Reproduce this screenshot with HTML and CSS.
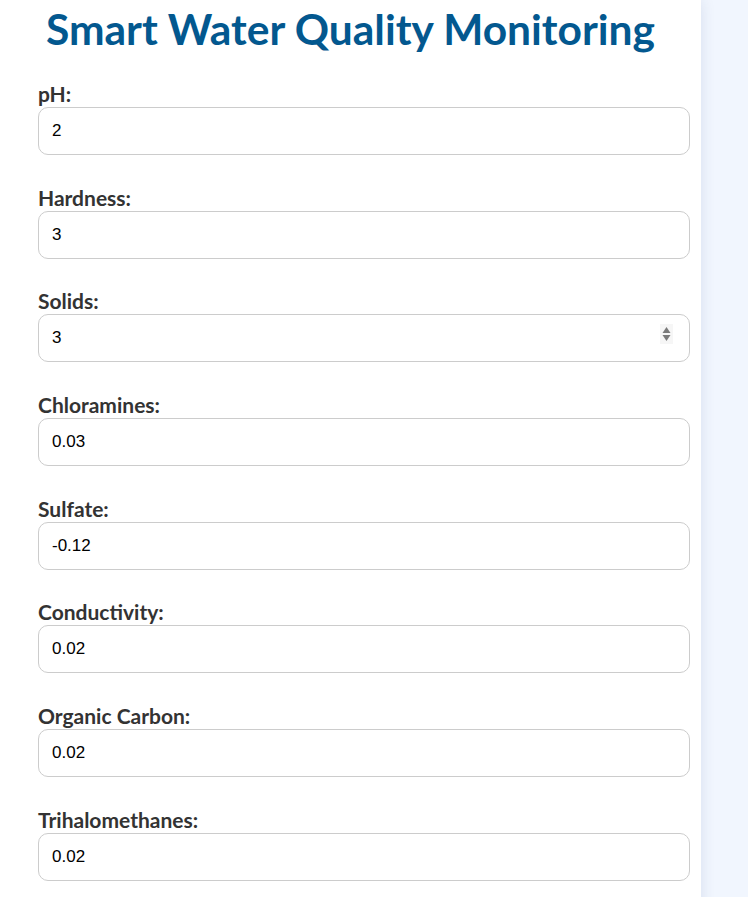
FILE: index.html
```html
<!DOCTYPE html>
<html>
<head>
<meta charset="utf-8">
<link rel="stylesheet" href="styles.css">
</head>
<body>
<div class="card">
  <h1 class="title">Smart Water Quality Monitoring</h1>
  <form class="form">
    <div class="group">
      <label class="label">pH:</label>
      <input class="field" type="text" value="2">
    </div>
    <div class="group">
      <label class="label">Hardness:</label>
      <input class="field" type="text" value="3">
    </div>
    <div class="group">
      <label class="label">Solids:</label>
      <div class="field-wrap">
        <input class="field" type="text" value="3">
        <span class="spinner">
          <svg width="11" height="18" viewBox="0 0 11 18"><path d="M5.5 2 L9.5 8 L1.5 8 Z" fill="#7a7a7a"/><path d="M1.5 10 L9.5 10 L5.5 16 Z" fill="#7a7a7a"/></svg>
        </span>
      </div>
    </div>
    <div class="group">
      <label class="label">Chloramines:</label>
      <input class="field" type="text" value="0.03">
    </div>
    <div class="group">
      <label class="label">Sulfate:</label>
      <input class="field" type="text" value="-0.12">
    </div>
    <div class="group">
      <label class="label">Conductivity:</label>
      <input class="field" type="text" value="0.02">
    </div>
    <div class="group">
      <label class="label">Organic Carbon:</label>
      <input class="field" type="text" value="0.02">
    </div>
    <div class="group">
      <label class="label">Trihalomethanes:</label>
      <input class="field" type="text" value="0.02">
    </div>
  </form>
</div>
</body>
</html>
```
FILE: styles.css
```css
html, body {
  margin: 0;
  padding: 0;
}
body {
  background: #f1f6fe;
  font-family: Lato, "Noto Sans", sans-serif;
  color: #333;
}
.card {
  width: 625px;
  margin-left: 0;
  padding: 5px 38px 40px 38px;
  background: #fff;
  box-shadow: 0 0 14px rgba(30, 60, 120, 0.12);
  min-height: 1000px;
}
.title {
  margin: 0 0 30px 0;
  font-size: 42.5px;
  line-height: 48px;
  font-weight: 700;
  color: #03588f;
  text-align: center;
}
.form {
  display: block;
}
.group {
  margin-bottom: 31.7px;
}
.label {
  display: block;
  font-size: 21px;
  line-height: 22px;
  font-weight: 700;
  color: #333;
  margin-bottom: 2px;
}
.field-wrap {
  position: relative;
}
.field {
  display: block;
  width: 624px;
  height: 22px;
  padding: 12px 13px;
  border: 1px solid #cccccc;
  border-radius: 10px;
  font-family: "Liberation Sans", Arial, sans-serif;
  font-size: 17px;
  color: #000;
  background: #fff;
  outline: none;
}
.spinner {
  position: absolute;
  left: 622px;
  top: 10px;
  width: 13px;
  height: 20px;
  display: flex;
  align-items: center;
  justify-content: center;
  background: #f6f6f6;
}
```
